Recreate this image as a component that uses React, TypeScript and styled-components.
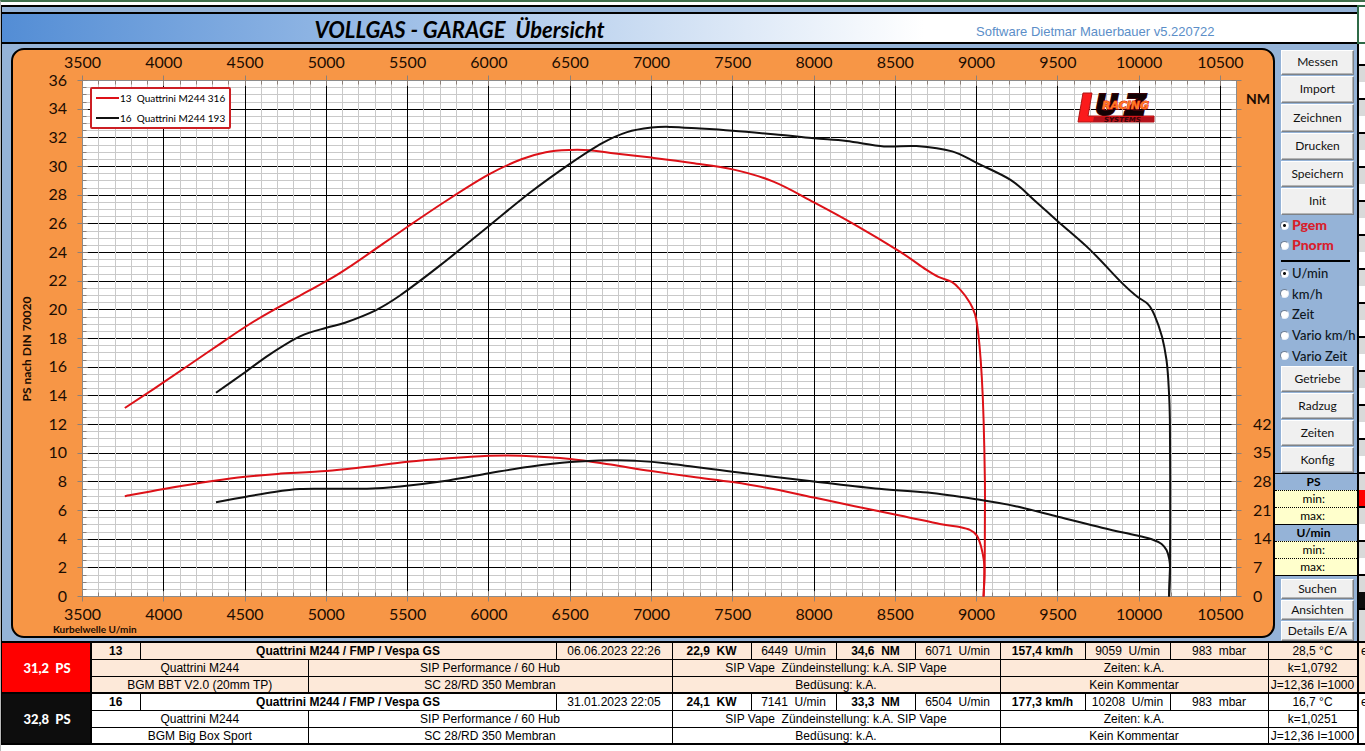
import React from "react";
import styled, { createGlobalStyle } from "styled-components";

const GlobalStyle = createGlobalStyle`
  *, *::before, *::after { box-sizing: border-box; }
  body { margin: 0; background: #fff; color: #000; font-family: Lato, "Liberation Sans", sans-serif; }
`;

const ORANGE = "#f79646";
const BLUE = "#95b3d7";
const RED = "#dd1118";

/* ---------- page frame ---------- */

const Page = styled.div`
  display: grid;
  grid-template-columns: minmax(0, 1fr) 8px;
  border-top: 2px solid #3f6f4c;
  border-left: 1px solid #b9b9b9;
  padding-top: 3px;
  min-height: 100vh;
  align-content: start;
`;

const Sheet = styled.div`
  border-left: 1px solid #000;
  min-width: 0;
`;

const TopBar = styled.div`
  height: 9px;
  background: ${BLUE};
  border-top: 2px solid #000;
  border-bottom: 2px solid #000;
`;

const Header = styled.header`
  display: grid;
  grid-template-columns: 915fr 440fr;
  align-items: center;
  height: 30px;
  border-bottom: 2px solid #000;
  background: linear-gradient(90deg, #538dd5 0%, #ffffff 68%);
`;

const Title = styled.h1`
  margin: 0;
  font-size: 22px;
  line-height: 24px;
  font-weight: 700;
  font-style: italic;
  text-align: center;
  white-space: pre;
  padding-top: 4px;
`;

const Version = styled.span`
  padding: 8px 0 0 59px;
  font-family: "Liberation Sans", Arial, sans-serif;
  font-size: 13px;
  line-height: 16px;
  color: #5b8ec8;
  white-space: nowrap;
`;

const Workspace = styled.main`
  display: grid;
  grid-template-columns: minmax(0, 1fr) 82px;
  background: ${BLUE};
`;

const ChartPanel = styled.section`
  align-self: start;
  margin: 4px 0 3px 9px;
  border: 2px solid #000;
  border-radius: 13px;
  background: ${ORANGE};
  overflow: hidden;
`;

const ChartSvg = styled.svg`
  display: block;
  width: 100%;
  height: auto;
`;

const AxisText = styled.text`
  font-size: 16px;
  fill: #1c0d02;
`;

const ChartNote = styled.text<{ $size: number }>`
  font-size: ${(p) => p.$size}px;
  font-weight: 700;
  fill: #1c0d02;
`;

const LegendText = styled.text`
  font-size: 10px;
  white-space: pre;
`;

const LogoText = styled.text<{ $size: number }>`
  font-family: "DejaVu Sans", sans-serif;
  font-weight: 700;
  font-style: italic;
  font-size: ${(p) => p.$size}px;
  paint-order: stroke;
`;

/* ---------- sidebar ---------- */

const Sidebar = styled.aside`
  display: flex;
  flex-direction: column;
  padding-top: 6px;
`;

const ButtonStack = styled.div`
  display: flex;
  flex-direction: column;
  gap: 1px;
  padding: 0 3px 0 6px;
`;

const ToolButton = styled.button<{ $height: number }>`
  height: ${(p) => p.$height}px;
  padding: 0 0 1px;
  border: 1px solid;
  border-color: #fff #7d8288 #7d8288 #fff;
  box-shadow: inset -1px -1px 0 #b4b4b4;
  background: #f0f0f0;
  color: #111;
  font-family: inherit;
  font-size: 12px;
  line-height: 16px;
`;

const RadioGroup = styled.div<{ $height: number }>`
  display: grid;
  grid-auto-rows: 1fr;
  height: ${(p) => p.$height}px;
  padding-left: 5px;
`;

const RadioLabel = styled.label<{ $strong?: boolean }>`
  display: flex;
  align-items: center;
  gap: 3px;
  white-space: nowrap;
  font-size: ${(p) => (p.$strong ? 14 : 13)}px;
  line-height: 16px;
  font-weight: ${(p) => (p.$strong ? 900 : 500)};
  color: ${(p) => (p.$strong ? "#d81e2c" : "#0e1620")};
`;

const Radio = styled.input`
  appearance: none;
  flex: none;
  width: 9px;
  height: 9px;
  margin: 0;
  border: 1px solid;
  border-color: #6d7f96 #e8eef6 #e8eef6 #6d7f96;
  border-radius: 50%;
  background: #fff;
  &:checked {
    background: radial-gradient(circle, #111 0 1px, #fff 2px);
  }
`;

const Divider = styled.hr`
  width: 69px;
  height: 2px;
  margin: 5px 0 1px 6px;
  border: 0;
  background: #000;
`;

const Limits = styled.fieldset`
  margin: 0;
  padding: 0;
  border: 0;
  min-width: 0;
  border-top: 1px solid #000;
`;

const LimitsTitle = styled.div`
  height: 16px;
  padding-right: 5px;
  text-align: center;
  font-size: 12px;
  line-height: 16px;
  font-weight: 700;
`;

const LimitRow = styled.label`
  display: grid;
  grid-template-columns: 50px minmax(0, 1fr);
  height: 17px;
  background: #ffffcc;
  border-top: 1px dotted #000;
  font-size: 12px;
  line-height: 16px;
  text-align: right;
`;

const LimitInput = styled.input`
  width: 100%;
  height: 15px;
  padding: 0 2px;
  border: 0;
  background: transparent;
  font: inherit;
`;

const BottomButtons = styled(ButtonStack)`
  border-top: 1px solid #000;
  padding-top: 3px;
`;

/* ---------- result table ---------- */

const Results = styled.table`
  width: 100%;
  table-layout: fixed;
  border-collapse: collapse;
  border-top: 2px solid #000;
  border-bottom: 2px solid #000;
  font-family: "Liberation Sans", Arial, sans-serif;
  font-size: 12px;
  line-height: 14px;
`;

const Run = styled.tbody<{ $tint: string }>`
  background: ${(p) => p.$tint};
  border-bottom: 2px solid #000;
`;

const Cell = styled.td<{ $bold?: boolean }>`
  height: 17px;
  padding: 1px 0 0;
  border: 1px solid #000;
  text-align: center;
  white-space: pre;
  overflow: hidden;
  font-weight: ${(p) => (p.$bold ? 700 : 400)};
`;

const PowerCell = styled.th<{ $color: string }>`
  padding: 0 0 0 2px;
  background: ${(p) => p.$color};
  border-right: 2px solid #000;
  color: #fff;
  font-family: Lato, sans-serif;
  font-size: 13px;
  font-weight: 900;
  white-space: pre;
`;

/* ---------- neighbouring sheet columns at the right edge ---------- */

const Edge = styled.div`
  display: flex;
  flex-direction: column;
  align-self: start;
`;

const EdgeHead = styled.div`
  height: 39px;
  border: 2px solid #2f6b47;
  border-right: 0;
`;

const EdgeBody = styled.div`
  border-left: 2px solid #000;
  padding-top: 20px;
`;

const EdgeRow = styled.div<{ $low: string; $height?: number }>`
  height: ${(p) => p.$height ?? 34}px;
  border-top: 2px solid #000;
  background: linear-gradient(#d9d9d9 16px, ${(p) => p.$low} 16px);
`;

const EdgeRun = styled.div<{ $tint: string }>`
  height: 51px;
  border-top: 2px solid #000;
  background: ${(p) => p.$tint};
  font-family: "Liberation Sans", Arial, sans-serif;
  font-size: 12px;
  line-height: 17px;
  padding-left: 2px;
  overflow: hidden;
`;

const EdgeEnd = styled.div`
  height: 2px;
  background: #000;
`;

/* ---------- chart data ---------- */

type Point = [number, number];

const power13: Point[] = [
  [3760, 13.15], [4000, 14.95], [4304, 17.3], [4500, 18.8], [4660, 19.9], [5000, 22], [5150, 23.05],
  [5500, 25.8], [5750, 27.7], [6000, 29.45], [6200, 30.5], [6350, 31], [6500, 31.15], [6620, 31.13],
  [6750, 30.95], [7000, 30.62], [7250, 30.25], [7500, 29.8], [7750, 28.95], [8000, 27.5],
  [8250, 25.95], [8528, 24.06], [8690, 22.8], [8765, 22.3], [8847, 21.95], [8897, 21.45],
  [8959, 20.5], [8990, 19.7], [9004, 18.9], [9018, 17.5], [9032, 15.3], [9043, 12.3], [9051, 8.1],
  [9051, 5.3], [9050, 2.5], [9044, 0],
];
const torque13: Point[] = [
  [3760, 7], [4000, 7.5], [4300, 8.05], [4500, 8.35], [4700, 8.55], [5000, 8.75], [5250, 9.05],
  [5500, 9.4], [5750, 9.65], [6000, 9.82], [6200, 9.82], [6500, 9.6], [6750, 9.2], [7000, 8.75],
  [7250, 8.35], [7500, 7.98], [7750, 7.5], [8000, 6.9], [8250, 6.3], [8528, 5.66], [8774, 5.06],
  [8897, 4.85], [8959, 4.65], [9002, 4.25], [9027, 3.5], [9045, 2.5], [9049, 1.5], [9042, 0],
];
const power16: Point[] = [
  [4321, 14.22], [4500, 15.65], [4653, 16.9], [4838, 18.15], [5000, 18.75], [5115, 19.1],
  [5303, 19.97], [5453, 21], [5700, 23.1], [6000, 25.85], [6250, 28.15], [6500, 30.2],
  [6700, 31.65], [6850, 32.4], [7000, 32.72], [7120, 32.76], [7300, 32.65], [7500, 32.5],
  [7750, 32.25], [8000, 31.97], [8200, 31.78], [8430, 31.4], [8630, 31.42], [8850, 31.05],
  [9000, 30.25], [9211, 29.05], [9360, 27.6], [9497, 26.2], [9697, 24.2], [9892, 21.9],
  [9985, 20.95], [10054, 20.4], [10096, 19.6], [10141, 18.1], [10168, 16.5], [10182, 14.6],
  [10189, 12.3], [10191, 7.66], [10190, 2.1], [10184, 0],
];
const torque16: Point[] = [
  [4321, 6.58], [4500, 6.95], [4680, 7.3], [4838, 7.5], [5000, 7.52], [5250, 7.52], [5453, 7.68],
  [5750, 8.1], [6000, 8.6], [6250, 9.05], [6500, 9.38], [6750, 9.5], [6900, 9.47], [7100, 9.28],
  [7500, 8.7], [8000, 8.03], [8400, 7.52], [8700, 7.25], [9000, 6.78], [9240, 6.3], [9500, 5.57],
  [9771, 4.8], [10000, 4.22], [10077, 4.0], [10138, 3.66], [10168, 3.24], [10184, 2.66],
  [10190, 2], [10184, 0],
];

const range = (from: number, to: number, step: number) =>
  Array.from({ length: Math.round((to - from) / step) + 1 }, (_, i) => from + i * step);

const LEFT = 69.5;
const RIGHT = 1223.5;
const TOP = 30.5;
const BOTTOM = 546.5;
const sx = (rpm: number) => LEFT + ((rpm - 3500) * 81.28) / 500;
const sy = (ps: number) => BOTTOM - (ps * (BOTTOM - TOP)) / 36;
const snap = (v: number) => Math.floor(v) + 0.5;

/* Catmull-Rom spline through the measured points */
function smooth(points: Point[]) {
  const p = points.map(([r, v]) => [sx(r), sy(v)]);
  let d = `M${p[0][0].toFixed(1)} ${p[0][1].toFixed(1)}`;
  for (let i = 0; i < p.length - 1; i++) {
    const a = p[Math.max(i - 1, 0)];
    const b = p[i];
    const c = p[i + 1];
    const e = p[Math.min(i + 2, p.length - 1)];
    const n = [
      b[0] + (c[0] - a[0]) / 6, b[1] + (c[1] - a[1]) / 6,
      c[0] - (e[0] - b[0]) / 6, c[1] - (e[1] - b[1]) / 6, c[0], c[1],
    ].map((v) => v.toFixed(1));
    d += `C${n.join(" ")}`;
  }
  return d;
}

const rpmMajor = range(3500, 10500, 500);
const rpmMinor = range(3600, 10500, 100);
const psMajor = range(0, 36, 2);
const psMinor = range(0.5, 35.5, 0.5);

const lines = (items: number[], draw: (v: number) => string) => items.map(draw).join("");

function Logo() {
  return (
    <g role="img" aria-label="LUZ Racing Systems">
      <path d="M1070 43h9l-4 23h66v6h-76z" fill="#fb1a1c" stroke="#b01414" strokeWidth="1" />
      <path d="M1081 67h60v5h-61z" fill="#b5121b" />
      <LogoText $size={29} x={1082} y={65} fill="#120204" stroke="#3c0408" strokeWidth="2">U</LogoText>
      <LogoText $size={29} x={1112} y={65} fill="#120204" stroke="#3c0408" strokeWidth="2">Z</LogoText>
      <LogoText $size={7} x={1091} y={72} fill="#3a0508">SYSTEMS</LogoText>
      <LogoText $size={11} x={1089} y={59} fill="#ff7a22" stroke="#e01a14" strokeWidth="1">RACING</LogoText>
    </g>
  );
}

function Chart() {
  return (
    <ChartSvg viewBox="0 0 1260 586" role="img" aria-label="Leistung und Drehmoment">
      <rect x={LEFT} y={TOP} width={RIGHT - LEFT} height={BOTTOM - TOP} fill="#fff" />
      <g fill="none" strokeWidth="1">
        <path stroke="#c9c9c9" d={lines(psMinor, (v) => `M${LEFT} ${snap(sy(v))}H${RIGHT}`)} />
        <path stroke="#000" d={lines(psMajor.slice(1, -1), (v) => `M${LEFT + 5} ${snap(sy(v))}H${RIGHT}`)} />
        <path stroke="#c9c9c9" d={lines(rpmMinor, (v) => `M${snap(sx(v))} ${TOP}V${BOTTOM}`)} />
        <path stroke="#000" d={lines(rpmMajor.slice(1), (v) => `M${snap(sx(v))} ${TOP + 5}V${BOTTOM - 5}`)} />
        <rect x={LEFT} y={TOP} width={RIGHT - LEFT} height={BOTTOM - TOP} stroke="#8c8c8c" />
        <path
          stroke="#8c8079"
          d={
            lines(psMajor, (v) => `M${LEFT - 5} ${snap(sy(v))}h10M${RIGHT - 5} ${snap(sy(v))}h10`) +
            lines(psMinor, (v) => `M${LEFT} ${snap(sy(v))}h4`) +
            lines(rpmMajor, (v) => `M${snap(sx(v))} ${TOP - 5}v10M${snap(sx(v))} ${BOTTOM - 5}v10`) +
            lines(rpmMinor, (v) => `M${snap(sx(v))} ${TOP}v4M${snap(sx(v))} ${BOTTOM}v-4`)
          }
        />
      </g>

      {rpmMajor.map((v) => (
        <React.Fragment key={v}>
          <AxisText x={sx(v)} y={18} textAnchor="middle">{v}</AxisText>
          <AxisText x={sx(v)} y={570} textAnchor="middle">{v}</AxisText>
        </React.Fragment>
      ))}
      {psMajor.map((v) => (
        <AxisText key={v} x={54} y={sy(v) + 5} textAnchor="end">{v}</AxisText>
      ))}
      {range(0, 42, 7).map((v) => (
        <AxisText key={v} x={1240} y={sy((v * 2) / 7) + 5}>{v}</AxisText>
      ))}

      <ChartNote $size={12} transform="translate(18 299) rotate(-90)" textAnchor="middle">PS nach DIN 70020</ChartNote>
      <ChartNote $size={10} x={40} y={583}>Kurbelwelle U/min</ChartNote>
      <ChartNote $size={14} x={1245} y={54} textAnchor="middle">NM</ChartNote>

      <Logo />

      <g fill="none" strokeWidth="2" strokeLinejoin="round">
        <path d={smooth(power13)} stroke={RED} />
        <path d={smooth(torque13)} stroke={RED} />
        <path d={smooth(power16)} stroke="#111" />
        <path d={smooth(torque16)} stroke="#111" />
      </g>

      <rect x="78" y="38" width="139" height="40" rx="1" fill="#fff" stroke="#cc1f24" strokeWidth="2" />
      <path d="M83 48h23" stroke={RED} strokeWidth="2" />
      <path d="M83 68h23" stroke="#111" strokeWidth="2" />
      <LegendText x={107} y={52}>{"13  Quattrini M244 316"}</LegendText>
      <LegendText x={107} y={72}>{"16  Quattrini M244 193"}</LegendText>
    </ChartSvg>
  );
}

const mainButtons: [string, number][] = [
  ["Messen", 25], ["Import", 27], ["Zeichnen", 28], ["Drucken", 27], ["Speichern", 26], ["Init", 27],
];

function LimitBox({ title }: { title: string }) {
  return (
    <Limits aria-label={title}>
      <LimitsTitle>{title}</LimitsTitle>
      <LimitRow>min:<LimitInput type="text" /></LimitRow>
      <LimitRow>max:<LimitInput type="text" /></LimitRow>
    </Limits>
  );
}

function Tools() {
  return (
    <Sidebar>
      <ButtonStack>
        {mainButtons.map(([name, height]) => (
          <ToolButton key={name} type="button" $height={height}>{name}</ToolButton>
        ))}
      </ButtonStack>
      <RadioGroup $height={40} role="radiogroup" aria-label="Leistung">
        {["Pgem", "Pnorm"].map((name, i) => (
          <RadioLabel key={name} $strong>
            <Radio type="radio" name="leistung" defaultChecked={i === 0} />
            {name}
          </RadioLabel>
        ))}
      </RadioGroup>
      <Divider />
      <RadioGroup $height={103} role="radiogroup" aria-label="Achse">
        {["U/min", "km/h", "Zeit", "Vario km/h", "Vario Zeit"].map((name, i) => (
          <RadioLabel key={name}>
            <Radio type="radio" name="achse" defaultChecked={i === 0} />
            {name}
          </RadioLabel>
        ))}
      </RadioGroup>
      <ButtonStack>
        {["Getriebe", "Radzug", "Zeiten", "Konfig"].map((name) => (
          <ToolButton key={name} type="button" $height={26}>{name}</ToolButton>
        ))}
      </ButtonStack>
      <LimitBox title="PS" />
      <LimitBox title="U/min" />
      <BottomButtons>
        {["Suchen", "Ansichten", "Details E/A"].map((name) => (
          <ToolButton key={name} type="button" $height={20}>{name}</ToolButton>
        ))}
      </BottomButtons>
    </Sidebar>
  );
}

const runs = [
  {
    id: "13", color: "#ff0000", tint: "#fde9d9", ps: "31,2  PS", date: "06.06.2023 22:26",
    kw: "22,9  KW", kwAt: "6449  U/min", nm: "34,6  NM", nmAt: "6071  U/min", speed: "157,4 km/h",
    rpm: "9059  U/min", temp: "28,5 °C", k: "k=1,0792", exhaust: "BGM BBT V2.0 (20mm TP)",
  },
  {
    id: "16", color: "#0d0d0d", tint: "#ffffff", ps: "32,8  PS", date: "31.01.2023 22:05",
    kw: "24,1  KW", kwAt: "7141  U/min", nm: "33,3  NM", nmAt: "6504  U/min", speed: "177,3 km/h",
    rpm: "10208  U/min", temp: "16,7 °C", k: "k=1,0251", exhaust: "BGM Big Box Sport",
  },
];

const columns = [89, 49, 168, 248, 116, 79, 85, 79, 85, 85, 85, 98, 89];

const Col = styled.col<{ $share: number }>`
  width: ${(p) => p.$share}px;
`;

function ResultTable() {
  return (
    <Results>
      <colgroup>
        {columns.map((w, i) => <Col key={i} $share={w} />)}
      </colgroup>
      {runs.map((r) => (
        <Run key={r.id} $tint={r.tint}>
          <tr>
            <PowerCell rowSpan={3} scope="rowgroup" $color={r.color}>{r.ps}</PowerCell>
            <Cell $bold>{r.id}</Cell>
            <Cell $bold colSpan={2}>Quattrini M244 / FMP / Vespa GS</Cell>
            <Cell>{r.date}</Cell>
            <Cell $bold>{r.kw}</Cell>
            <Cell>{r.kwAt}</Cell>
            <Cell $bold>{r.nm}</Cell>
            <Cell>{r.nmAt}</Cell>
            <Cell $bold>{r.speed}</Cell>
            <Cell>{r.rpm}</Cell>
            <Cell>{"983  mbar"}</Cell>
            <Cell>{r.temp}</Cell>
          </tr>
          <tr>
            <Cell colSpan={2}>Quattrini M244</Cell>
            <Cell colSpan={2}>SIP Performance / 60 Hub</Cell>
            <Cell colSpan={4}>{"SIP Vape  Zündeinstellung: k.A. SIP Vape"}</Cell>
            <Cell colSpan={3}>Zeiten: k.A.</Cell>
            <Cell>{r.k}</Cell>
          </tr>
          <tr>
            <Cell colSpan={2}>{r.exhaust}</Cell>
            <Cell colSpan={2}>SC 28/RD 350 Membran</Cell>
            <Cell colSpan={4}>Bedüsung: k.A.</Cell>
            <Cell colSpan={3}>Kein Kommentar</Cell>
            <Cell>J=12,36 I=1000</Cell>
          </tr>
        </Run>
      ))}
    </Results>
  );
}

const edgeRows = Array.from({ length: 16 }, (_, i) => (i === 12 ? "#ff0000" : i === 15 ? "#0d0d0d" : "#ffffff"));

export default function App() {
  return (
    <>
      <GlobalStyle />
      <Page>
        <Sheet>
          <TopBar />
          <Header>
            <Title>{"VOLLGAS - GARAGE  Übersicht"}</Title>
            <Version>Software Dietmar Mauerbauer v5.220722</Version>
          </Header>
          <Workspace>
            <ChartPanel>
              <Chart />
            </ChartPanel>
            <Tools />
          </Workspace>
          <ResultTable />
        </Sheet>
        <Edge>
          <EdgeHead />
          <EdgeBody>
            {edgeRows.map((low, i) => <EdgeRow key={i} $low={low} />)}
            <EdgeRow $low="#d9d9d9" $height={33} />
            {runs.map((r) => <EdgeRun key={r.id} $tint={r.tint}>e</EdgeRun>)}
            <EdgeEnd />
          </EdgeBody>
        </Edge>
      </Page>
    </>
  );
}
